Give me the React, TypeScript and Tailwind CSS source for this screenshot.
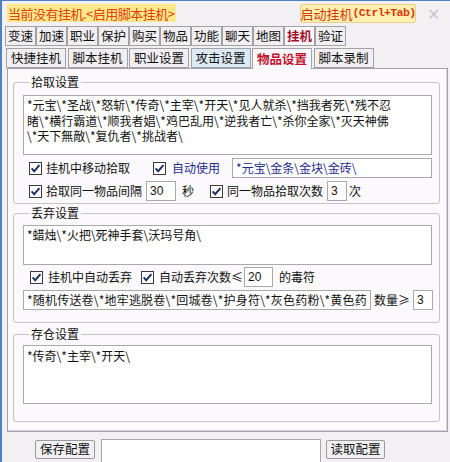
import React from 'react';

const cjk = '[font-family:"Noto_Sans_CJK_SC","Noto_Sans",sans-serif]';

const Check = () => (
  <svg width="13" height="13" viewBox="0 0 13 13" className="shrink-0">
    <rect x="0.5" y="0.5" width="12" height="12" fill="#fff" stroke="#3a3a3a" />
    <path d="M2.6 6.4 L5.2 9.2 L10.4 3.2" fill="none" stroke="#1d3262" strokeWidth="2" />
  </svg>
);

const Box = ({ w, value, className = '' }: { w: string; value: string; className?: string }) => (
  <div
    className={`${w} h-[20px] shrink-0 bg-white border border-[#a9a9ad] px-[3px] flex items-center overflow-hidden whitespace-nowrap text-[12px] ${className}`}
  >
    {value}
  </div>
);

const TopTab = ({ label, active }: { label: string; active?: boolean }) => (
  <div
    className={`w-[31px] h-[20px] shrink-0 flex items-center justify-center border border-[#a2a2a6] text-[12.5px] leading-none whitespace-nowrap ${
      active ? 'bg-[#fbf9fc] text-[#a3102a] font-bold' : 'bg-[#f1eff2] text-[#111]'
    }`}
  >
    {label}
  </div>
);

const SubTab = ({ label, active, hover }: { label: string; active?: boolean; hover?: boolean }) => (
  <div
    className={`w-[60px] shrink-0 flex items-center justify-center border border-[#a2a2a6] text-[12.5px] leading-none whitespace-nowrap ${
      active
        ? 'h-[21px] border-b-0 bg-[#fbf9fc] text-[#c2122e] font-bold'
        : hover
        ? 'h-[20px] bg-[#dceaf7] text-[#111]'
        : 'h-[20px] bg-[#f1eff2] text-[#111]'
    }`}
  >
    {label}
  </div>
);

const Group = ({ title, children, className = '' }: { title: string; children: React.ReactNode; className?: string }) => (
  <fieldset className={`border border-[#c4c2c8] rounded-[3px] pl-[9px] pr-[6px] ${className}`}>
    <legend className="ml-[6px] px-[2px] text-[12px] leading-[14px] text-[#111]">{title}</legend>
    {children}
  </fieldset>
);

export default function App() {
  return (
    <div
      className={`w-[450px] h-[462px] overflow-hidden bg-[#f2f0f3] border-l-2 border-t border-[#4d82c2] text-[#111] ${cjk}`}
    >
      {/* title row */}
      <div className="h-[24px] flex items-center pl-[5px] pr-[10px] whitespace-nowrap">
        <div className="h-[18px] px-[1px] flex items-center bg-[#fde98c] text-[#e0400a] text-[13px] leading-none tracking-[-0.5px]">
          当前没有挂机.&lt;启用脚本挂机&gt;
        </div>
        <div className="flex-1" />
        <div className="h-[19px] w-[116px] flex items-center justify-center bg-[#fff0b0] border border-[#e8cf8a] rounded-[2px] text-[#d6380c] text-[13px] leading-none">
          启动挂机<span className='[font-family:"Liberation_Mono",monospace] text-[11.5px] font-bold tracking-[-0.6px]'>(Ctrl+Tab)</span>
        </div>
        <div className="ml-[11px] text-[#c8c6cc] text-[16px] leading-none">✕</div>
      </div>

      {/* main tabs */}
      <div className="mt-[1px] ml-[3px] flex">
        {['变速', '加速', '职业', '保护', '购买', '物品', '功能', '聊天', '地图'].map((t) => (
          <TopTab key={t} label={t} />
        ))}
        <TopTab label="挂机" active />
        <TopTab label="验证" />
      </div>

      {/* sub tabs */}
      <div className="mt-[2px] ml-[4px] flex gap-[1.5px] items-start">
        <SubTab label="快捷挂机" />
        <SubTab label="脚本挂机" />
        <SubTab label="职业设置" />
        <SubTab label="攻击设置" hover />
        <SubTab label="物品设置" active />
        <SubTab label="脚本录制" />
      </div>

      {/* panel */}
      <div className="ml-[5px] w-[441px] h-[364px] -mt-[1px] border border-[#a4a2a8] bg-[#fbf9fc] shadow-[inset_-1px_-1px_0_#d6d4da] pt-[6px] px-[5px]">
        <Group title="拾取设置" className="w-[427px] pb-[2px]">
          <div className="mt-[6px] h-[60px] w-[409px] bg-white border border-[#a9a9ad] px-[3px] pt-[1px] text-[12px] leading-[15.5px] whitespace-nowrap overflow-hidden">
            <div>{'*元宝\\*圣战\\*怒斩\\*传奇\\*主宰\\*开天\\*见人就杀\\*挡我者死\\*残不忍'}</div>
            <div>{'睹\\*横行霸道\\*顺我者娼\\*鸡巴乱用\\*逆我者亡\\*杀你全家\\*灭天神佛'}</div>
            <div>{'\\*天下無敵\\*复仇者\\*挑战者\\'}</div>
          </div>
          <div className="mt-[3px] h-[20px] flex items-center text-[12px] whitespace-nowrap">
            <div className="ml-[6px]"><Check /></div>
            <span className="ml-[4px]">挂机中移动拾取</span>
            <div className="ml-[23px]"><Check /></div>
            <span className="ml-[6px] text-[#1f2b8c]">自动使用</span>
            <Box w="w-[200px]" className="ml-[12px] text-[#1f2b8c]" value={'*元宝\\金条\\金块\\金砖\\'} />
          </div>
          <div className="mt-[3px] h-[20px] flex items-center text-[12px] whitespace-nowrap">
            <div className="ml-[6px]"><Check /></div>
            <span className="ml-[4px]">拾取同一物品间隔</span>
            <Box w="w-[30px]" className="ml-[4px] [font-family:'Liberation_Sans',sans-serif]" value="30" />
            <span className="ml-[6px]">秒</span>
            <div className="ml-[16px]"><Check /></div>
            <span className="ml-[4px]">同一物品拾取次数</span>
            <Box w="w-[20px]" className="ml-[4px] [font-family:'Liberation_Sans',sans-serif]" value="3" />
            <span className="ml-[2px]">次</span>
          </div>
        </Group>

        <Group title="丢弃设置" className="w-[427px] mt-[2px] pb-[12px]">
          <div className="mt-[5px] h-[40px] w-[409px] bg-white border border-[#a9a9ad] px-[3px] pt-[1px] text-[12px] leading-[15.5px]">
            {'*蜡烛\\*火把\\死神手套\\沃玛号角\\'}
          </div>
          <div className="mt-[2px] h-[20px] flex items-center text-[12px] whitespace-nowrap">
            <div className="ml-[7px]"><Check /></div>
            <span className="ml-[5px]">挂机中自动丢弃</span>
            <div className="ml-[9px]"><Check /></div>
            <span className="ml-[5px]">自动丢弃次数≤</span>
            <Box w="w-[29px]" className="ml-[1px] [font-family:'Liberation_Sans',sans-serif]" value="20" />
            <span className="ml-[6px]">的毒符</span>
          </div>
          <div className="mt-[3px] h-[20px] flex items-center text-[12px] whitespace-nowrap">
            <Box w="w-[348px]" className="tracking-[0.2px]" value={'*随机传送卷\\*地牢逃脱卷\\*回城卷\\*护身符\\*灰色药粉\\*黄色药'} />
            <span className="ml-[3px]">数量≥</span>
            <Box w="w-[20px]" className="ml-[3px] [font-family:'Liberation_Sans',sans-serif]" value="3" />
          </div>
        </Group>

        <Group title="存仓设置" className="w-[427px] mt-[4px] pb-[17px]">
          <div className="mt-[4px] h-[59px] w-[409px] bg-white border border-[#a9a9ad] px-[3px] pt-[2px] text-[12px] leading-[15.5px]">
            {'*传奇\\*主宰\\*开天\\'}
          </div>
        </Group>
      </div>

      {/* bottom bar */}
      <div className="mt-[8px] flex items-start">
        <button className="ml-[33px] h-[19px] w-[60px] flex items-center justify-center bg-[#f1f0f2] border border-[#9a9a9e] rounded-[2px] text-[12.5px] leading-none whitespace-nowrap">
          保存配置
        </button>
        <div className="ml-[6px] -mt-[1px] h-[24px] w-[220px] bg-white border border-[#a9a9ad]" />
        <button className="ml-[5px] h-[19px] w-[59px] flex items-center justify-center bg-[#f1f0f2] border border-[#9a9a9e] rounded-[2px] text-[12.5px] leading-none whitespace-nowrap">
          读取配置
        </button>
      </div>
    </div>
  );
}
